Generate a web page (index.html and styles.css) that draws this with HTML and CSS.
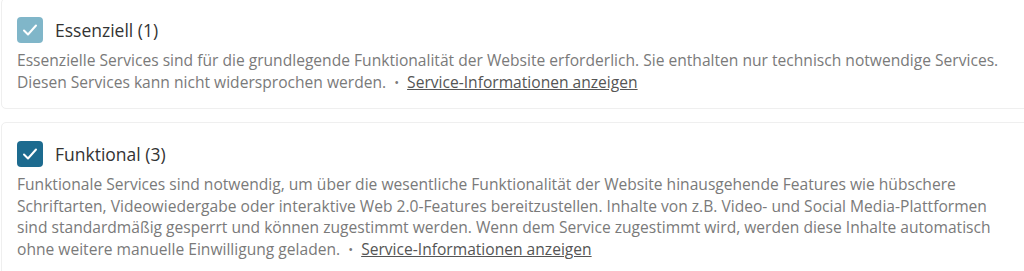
FILE: index.html
```html
<!DOCTYPE html>
<html lang="de">
<head>
    <meta charset="UTF-8">
    <meta name="viewport" content="width=device-width, initial-scale=1.0">
    <title>Privatsphäre-Einstellungen</title>
    <link rel="stylesheet" href="styles.css">
</head>
<body>
    <div class="groups">
        <div class="group">
            <label class="group-head">
                <span class="checkbox checkbox-disabled">
                    <svg viewBox="0 0 26 26" width="26" height="26"><polyline points="7,13.5 11,17.5 19,8.5"/></svg>
                </span>
                <span class="group-title">Essenziell (1)</span>
            </label>
            <p class="group-desc">
                Essenzielle Services sind für die grundlegende Funktionalität der Website erforderlich. Sie enthalten nur technisch notwendige Services. Diesen Services kann nicht widersprochen werden.
                <span class="sep">•</span>
                <a href="#" class="group-link">Service-Informationen anzeigen</a>
            </p>
        </div>

        <div class="group">
            <label class="group-head">
                <span class="checkbox">
                    <svg viewBox="0 0 26 26" width="26" height="26"><polyline points="7,13.5 11,17.5 19,8.5"/></svg>
                </span>
                <span class="group-title">Funktional (3)</span>
            </label>
            <p class="group-desc">
                Funktionale Services sind notwendig, um über die wesentliche Funktionalität der Website hinausgehende Features wie hübschere Schriftarten, Videowiedergabe oder interaktive Web 2.0-Features bereitzustellen. Inhalte von z.B. Video- und Social Media-Plattformen sind standardmäßig gesperrt und können zugestimmt werden. Wenn dem Service zugestimmt wird, werden diese Inhalte automatisch ohne weitere manuelle Einwilligung geladen.
                <span class="sep">•</span>
                <a href="#" class="group-link">Service-Informationen anzeigen</a>
            </p>
        </div>
    </div>
</body>
</html>
```

FILE: styles.css
```css
body {
    margin: 0;
    font-family: "Open Sans", Arial, sans-serif;
    background-color: #fff;
    overflow: hidden;
}

.groups {
    margin-top: -2px;
    padding-left: 1px;
    width: 1040px;
}

.group {
    border: 1px solid #efefef;
    border-radius: 5px;
    padding: 18px 15px 15px 15px;
    margin-bottom: 13px;
}

.group-head {
    display: flex;
    align-items: center;
    gap: 12px;
}

.checkbox {
    width: 26px;
    height: 26px;
    border-radius: 4px;
    background-color: #1d6b8f;
    display: flex;
}

.checkbox-disabled {
    background-color: #80b6c9;
}

.checkbox svg polyline {
    fill: none;
    stroke: #fff;
    stroke-width: 2;
    stroke-linecap: round;
    stroke-linejoin: round;
}

.group-title {
    font-size: 17.5px;
    color: #333;
}

.group-desc {
    margin: 7px 0 0 0;
    font-size: 15.6px;
    line-height: 21.6px;
    color: #7a7a7a;
    width: 988px;
}

.sep {
    margin: 0 4px;
    font-size: 13px;
    vertical-align: 1px;
}

.group-link {
    color: #555;
    text-decoration: underline;
}
```
